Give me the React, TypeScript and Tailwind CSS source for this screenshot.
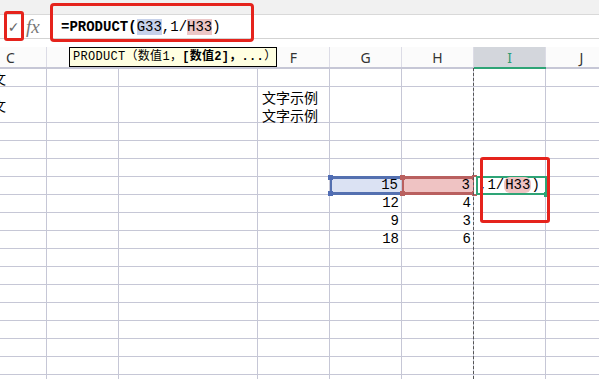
import React from "react";

const COLS = [
  { id: "C", w: 47 },
  { id: "D", w: 72 },
  { id: "E", w: 139 },
  { id: "F", w: 72 },
  { id: "G", w: 72 },
  { id: "H", w: 72 },
  { id: "I", w: 72 },
  { id: "J", w: 72 },
];

// cell area height per row; a 1px grid line is added under each
const ROW_H = [18, 35, 17, 17, 17, 17, 17, 17, 17, 17, 17, 17, 17, 17, 17, 17, 17];

const NUMS: Record<number, [string, string]> = {
  6: ["12", "4"],
  7: ["9", "3"],
  8: ["18", "6"],
};

const mono = "font-['Liberation_Mono','Noto_Sans_CJK_SC',monospace]";
const line = "bg-[#c6c7d6]";

function Handle({ pos, color }: { pos: string; color: string }) {
  return <span className={`absolute w-[5px] h-[5px] ${pos} ${color}`} />;
}

function Cell({ r, c }: { r: number; c: number }) {
  const col = COLS[c].id;
  const base = "relative shrink-0 flex items-center";
  const st = { width: COLS[c].w - 1 };

  if (col === "C" && (r === 0 || r === 1)) {
    return (
      <div style={st} className={`${base} overflow-hidden`}>
        <span className="absolute left-[-8px] text-[14px] text-black font-['Noto_Sans_CJK_SC',sans-serif] leading-none">
          文
        </span>
      </div>
    );
  }

  if (col === "F" && r === 1) {
    return (
      <div style={st} className={`${base} items-start`}>
        <div className="pl-[4px] pt-[1px] text-[14px] text-black font-['Noto_Sans_CJK_SC',sans-serif] whitespace-nowrap">
          <div className="h-[18px] leading-[18px]">文字示例</div>
          <div className="h-[18px] leading-[18px]">文字示例</div>
        </div>
      </div>
    );
  }

  if (r === 5 && col === "G") {
    return (
      <div style={st} className={`${base} justify-end bg-[#dbe2f3]`}>
        <span className={`${mono} text-[14px] pr-[3px] text-black`}>15</span>
        <div className="absolute left-0 right-[-1px] top-[-1px] bottom-[-1px] border-y-[3px] border-l-[2px] border-[#5470b0]">
          <Handle pos="left-[-4px] top-[-4px]" color="bg-[#4f6cb4]" />
          <Handle pos="left-[-4px] bottom-[-4px]" color="bg-[#4f6cb4]" />
        </div>
      </div>
    );
  }

  if (r === 5 && col === "H") {
    return (
      <div style={st} className={`${base} justify-end bg-[#efc3c3]`}>
        <span className={`${mono} text-[14px] pr-[3px] text-black`}>3</span>
        <div className="absolute left-0 right-[-2px] top-[-1px] bottom-[-1px] border-y-[3px] border-x-[2px] border-[#b9605f]">
          <Handle pos="left-[-4px] top-[-4px]" color="bg-[#b9605f]" />
          <Handle pos="left-[-4px] bottom-[-4px]" color="bg-[#b9605f]" />
          <Handle pos="right-[-4px] top-[-4px]" color="bg-[#b9605f]" />
          <Handle pos="right-[-4px] bottom-[-4px]" color="bg-[#b9605f]" />
        </div>
      </div>
    );
  }

  if (r === 5 && col === "I") {
    return (
      <div style={st} className={`${base} bg-white`}>
        <div className="absolute left-[2px] right-[-2px] top-[-1px] bottom-[-1px] border-2 border-[#2ea476]">
          <span className="absolute right-[-4px] bottom-[-4px] w-[5px] h-[5px] bg-[#2ea476]" />
        </div>
        <span className={`${mono} text-[14px] text-black pl-[5px] whitespace-nowrap relative`}>
          ,1/<span className="bg-[#efc3c3] rounded-[6px] px-[1px]">H33</span>)
        </span>
      </div>
    );
  }

  if (NUMS[r] && (col === "G" || col === "H")) {
    const v = col === "G" ? NUMS[r][0] : NUMS[r][1];
    return (
      <div style={st} className={`${base} justify-end`}>
        <span className={`${mono} text-[14px] pr-[2px] text-black`}>{v}</span>
      </div>
    );
  }

  return <div style={st} className={base} />;
}

export default function App() {
  return (
    <div className="relative w-[599px] h-[379px] overflow-hidden bg-white flex flex-col">
      {/* toolbar remnant */}
      <div className="h-[14px] shrink-0 bg-[#f1f1f1]" />
      <div className="h-px shrink-0 bg-[#d9d9d9]" />

      {/* formula bar */}
      <div className="h-[23px] shrink-0 flex items-center bg-white">
        <div className="w-[26px] flex justify-center">
          <span className="text-[#666] text-[14px] leading-none font-['DejaVu_Sans',sans-serif] pl-[1px]">✓</span>
        </div>
        <span className="w-[24px] text-[#777] italic text-[19px] font-['Liberation_Serif',serif] leading-none">
          fx
        </span>
        <div className={`pl-[11px] ${mono} text-[14px] text-black whitespace-nowrap leading-[20px]`}>
          <span className="font-bold">=PRODUCT(</span>
          <span className="bg-[#c6d1ea]">G33</span>,1/
          <span className="bg-[#ecc6c6]">H33</span>)
        </div>
      </div>
      <div className="h-px shrink-0 bg-[#d3d3d3]" />

      <div className="h-[8px] shrink-0 bg-white" />

      {/* column header */}
      <div className="h-[20px] shrink-0 flex bg-[#fbfbfb]">
        {COLS.map((c) => (
          <React.Fragment key={c.id}>
            <div
              style={{ width: c.w - 1 }}
              className={`shrink-0 flex items-center text-[14px] font-['Noto_Sans',sans-serif] ${
                c.id === "I" ? "bg-[#d3d6dc] text-[#2e9c74]" : "text-[#333]"
              } ${c.id === "C" ? "justify-start pl-[6px]" : "justify-center"}`}
            >
              {c.id}
            </div>
            <div className="w-px shrink-0 bg-[#dcdce6]" />
          </React.Fragment>
        ))}
      </div>
      <div className="h-[2px] shrink-0 flex">
        <div className={`w-[474px] shrink-0 ${line}`} />
        <div className="w-[72px] shrink-0 bg-[#2ea476]" />
        <div className={`flex-1 ${line}`} />
      </div>

      {/* rows */}
      {ROW_H.map((h, r) => (
        <React.Fragment key={r}>
          <div style={{ height: r === 0 ? h - 1 : h }} className="flex shrink-0">
            {COLS.map((c, ci) => (
              <React.Fragment key={c.id}>
                <Cell r={r} c={ci} />
                <div className={`w-px shrink-0 ${line}`} />
              </React.Fragment>
            ))}
          </div>
          <div className={`h-px shrink-0 ${line}`} />
        </React.Fragment>
      ))}

      {/* dashed copy border on column I */}
      <div className="absolute left-[473px] top-[68px] bottom-0 border-l border-dashed border-[#555]" />

      {/* tooltip */}
      <div className="absolute left-[69px] top-[47px] w-[208px] h-[20px] bg-[#ffffe1] border border-black flex items-center pl-[3px] text-[12px] tracking-[0.3px] text-black whitespace-nowrap font-['Liberation_Mono','Noto_Sans_CJK_SC',monospace]">
        PRODUCT（数值1，<b>[数值2]，...</b>）
      </div>

      {/* red annotation boxes */}
      <div className="absolute left-[4px] top-[11px] w-[20px] h-[30px] border-[3px] border-[#e5231c] rounded-[3px]" />
      <div className="absolute left-[50px] top-[3px] w-[204px] h-[39px] border-[3px] border-[#e5231c] rounded-[4px]" />
      <div className="absolute left-[480px] top-[157px] w-[70px] h-[66px] border-[3px] border-[#e5231c] rounded-[3px]" />
    </div>
  );
}
